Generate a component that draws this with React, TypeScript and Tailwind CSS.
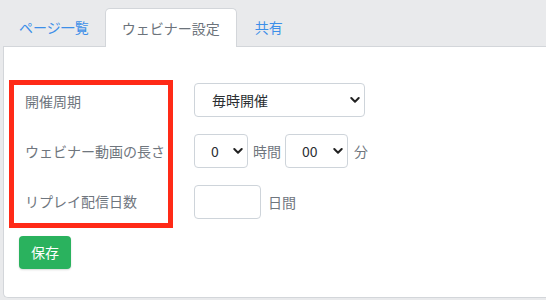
import React from "react";

const font = { fontFamily: '"Noto Sans CJK JP", "Noto Sans", sans-serif' };

function Chevron() {
  return (
    <svg width="10" height="7" viewBox="0 0 10 7" className="pointer-events-none absolute right-[4px] top-1/2 -translate-y-1/2">
      <path d="M1.3 1.5 L5 5.2 L8.7 1.5" fill="none" stroke="#222" strokeWidth="2" strokeLinecap="round" strokeLinejoin="round" />
    </svg>
  );
}

function Select({ value, width, pl }: { value: string; width: string; pl: string }) {
  return (
    <div className={`relative h-[34px] ${width} rounded-[4px] border border-[#ced4da] bg-white flex items-center`}>
      <span className={`${pl} text-[14px] text-[#2b2f33]`}>{value}</span>
      <Chevron />
    </div>
  );
}

export default function App() {
  return (
    <div className="w-[546px] h-[300px] bg-[#e9eaec] overflow-hidden pt-[8px]" style={font}>
      <div className="flex pl-[3px] h-[38px] text-[14px]">
        <div className="px-[15px] border border-transparent flex items-center text-[#3d8fe8]">ページ一覧</div>
        <div className="px-[16px] border border-[#d3d6da] border-b-0 rounded-t-[5px] bg-white flex items-center text-[#6c737b] relative z-10 mb-[-1px]">ウェビナー設定</div>
        <div className="px-[17px] border border-transparent flex items-center text-[#3d8fe8]">共有</div>
      </div>
      <div className="ml-[3px] h-[252px] bg-white border-t border-l border-b border-[#d3d6da] rounded-bl-[5px] pl-[5px] pt-[33px]">
        <div className="flex">
          <div className="w-[164px] h-[148px] border-[5px] border-[#ff2a17] flex flex-col gap-[17px] pl-[11px] pt-[-1px] text-[14px] text-[#6f767e]">
            <div className="h-[33px] flex items-center">開催周期</div>
            <div className="h-[33px] flex items-center whitespace-nowrap">ウェビナー動画の長さ</div>
            <div className="h-[33px] flex items-center">リプレイ配信日数</div>
          </div>
          <div className="ml-[21px] mt-[3px] flex flex-col gap-[17px] text-[14px]">
            <Select value="毎時開催" width="w-[171px]" pl="pl-[17px]" />
            <div className="flex items-center h-[34px]">
              <Select value="0" width="w-[54px]" pl="pl-[16px]" />
              <span className="ml-[5px] text-[#6f767e]">時間</span>
              <div className="ml-[4px]">
                <Select value="00" width="w-[63px]" pl="pl-[16px]" />
              </div>
              <span className="ml-[6px] text-[#6f767e]">分</span>
            </div>
            <div className="flex items-center h-[34px]">
              <div className="h-[34px] w-[67px] rounded-[4px] border border-[#ced4da] bg-white" />
              <span className="ml-[7px] text-[#6f767e]">日間</span>
            </div>
          </div>
        </div>
        <div className="mt-[8px] ml-[10px] w-[52px] h-[33px] rounded-[4px] bg-[#2ab25e] text-white text-[14px] flex items-center justify-center shadow-[0_1px_2px_rgba(0,0,0,0.15)]">保存</div>
      </div>
    </div>
  );
}
